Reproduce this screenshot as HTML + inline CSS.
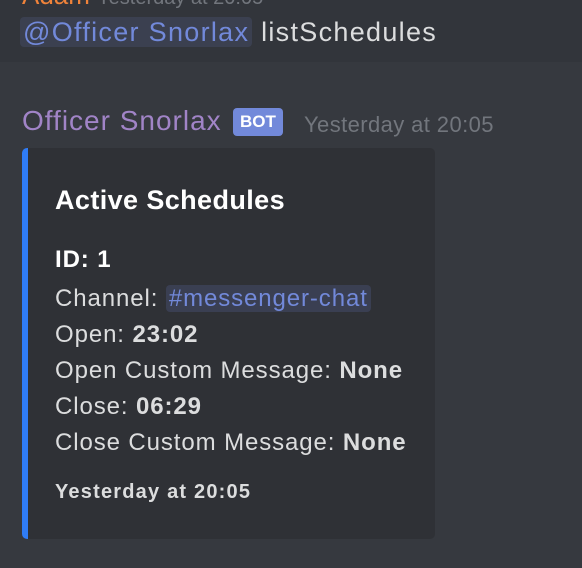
<html><head><style>
body{margin:0;width:582px;height:568px;background:#36393f;font-family:"Liberation Sans",sans-serif;position:relative;overflow:hidden}
.top{position:absolute;left:0;top:0;width:582px;height:62px;background:#32353b}
.a{position:absolute;white-space:nowrap}
.m{background:#3b4050;color:#7289da;border-radius:4px;padding:0 3px}
.e{position:absolute;left:22px;top:148px;width:413px;height:391px;background:#2f3136;border-radius:5px;overflow:hidden}
.bar{position:absolute;left:0;top:0;width:6px;height:100%;background:#2f7cf6}
.l{position:absolute;left:33px;color:#dcddde;font-size:24px;letter-spacing:0.9px;white-space:nowrap}
b{font-weight:bold}
</style></head><body>
<div class="top"></div>
<div class="a" style="left:22px;top:-20px;font-size:26px;color:#f0833a">Adam <span style="color:#72767d;font-size:20px">Yesterday at 20:05</span></div>
<div class="a" style="left:20px;top:17px;font-size:27px;letter-spacing:1.3px;color:#dcddde"><span class="m">@Officer Snorlax</span> listSchedules</div>
<div class="a" style="left:22px;top:105px;font-size:28px;letter-spacing:1px;color:#a184c7">Officer Snorlax</div>
<div class="a" style="left:233px;top:108px;background:#7289da;color:#fff;font-size:17px;font-weight:bold;border-radius:4px;padding:2px 7px;height:24px;line-height:24px">BOT</div>
<div class="a" style="left:304px;top:112px;font-size:22px;letter-spacing:0.4px;color:#72767d">Yesterday at 20:05</div>
<div class="e"><div class="bar"></div>
<div class="l" style="top:37px;font-size:27px;letter-spacing:0.4px;font-weight:bold;color:#fff">Active Schedules</div>
<div class="l" style="top:98px;font-weight:bold;color:#fff">ID: 1</div>
<div class="l" style="top:137px">Channel: <span class="m" style="background:#3a3f52">#messenger-chat</span></div>
<div class="l" style="top:173px">Open: <b>23:02</b></div>
<div class="l" style="top:209px">Open Custom Message: <b>None</b></div>
<div class="l" style="top:245px">Close: <b>06:29</b></div>
<div class="l" style="top:281px">Close Custom Message: <b>None</b></div>
<div class="l" style="top:333px;font-size:20px;font-weight:bold;letter-spacing:1.2px">Yesterday at 20:05</div>
</div>
</body></html>
